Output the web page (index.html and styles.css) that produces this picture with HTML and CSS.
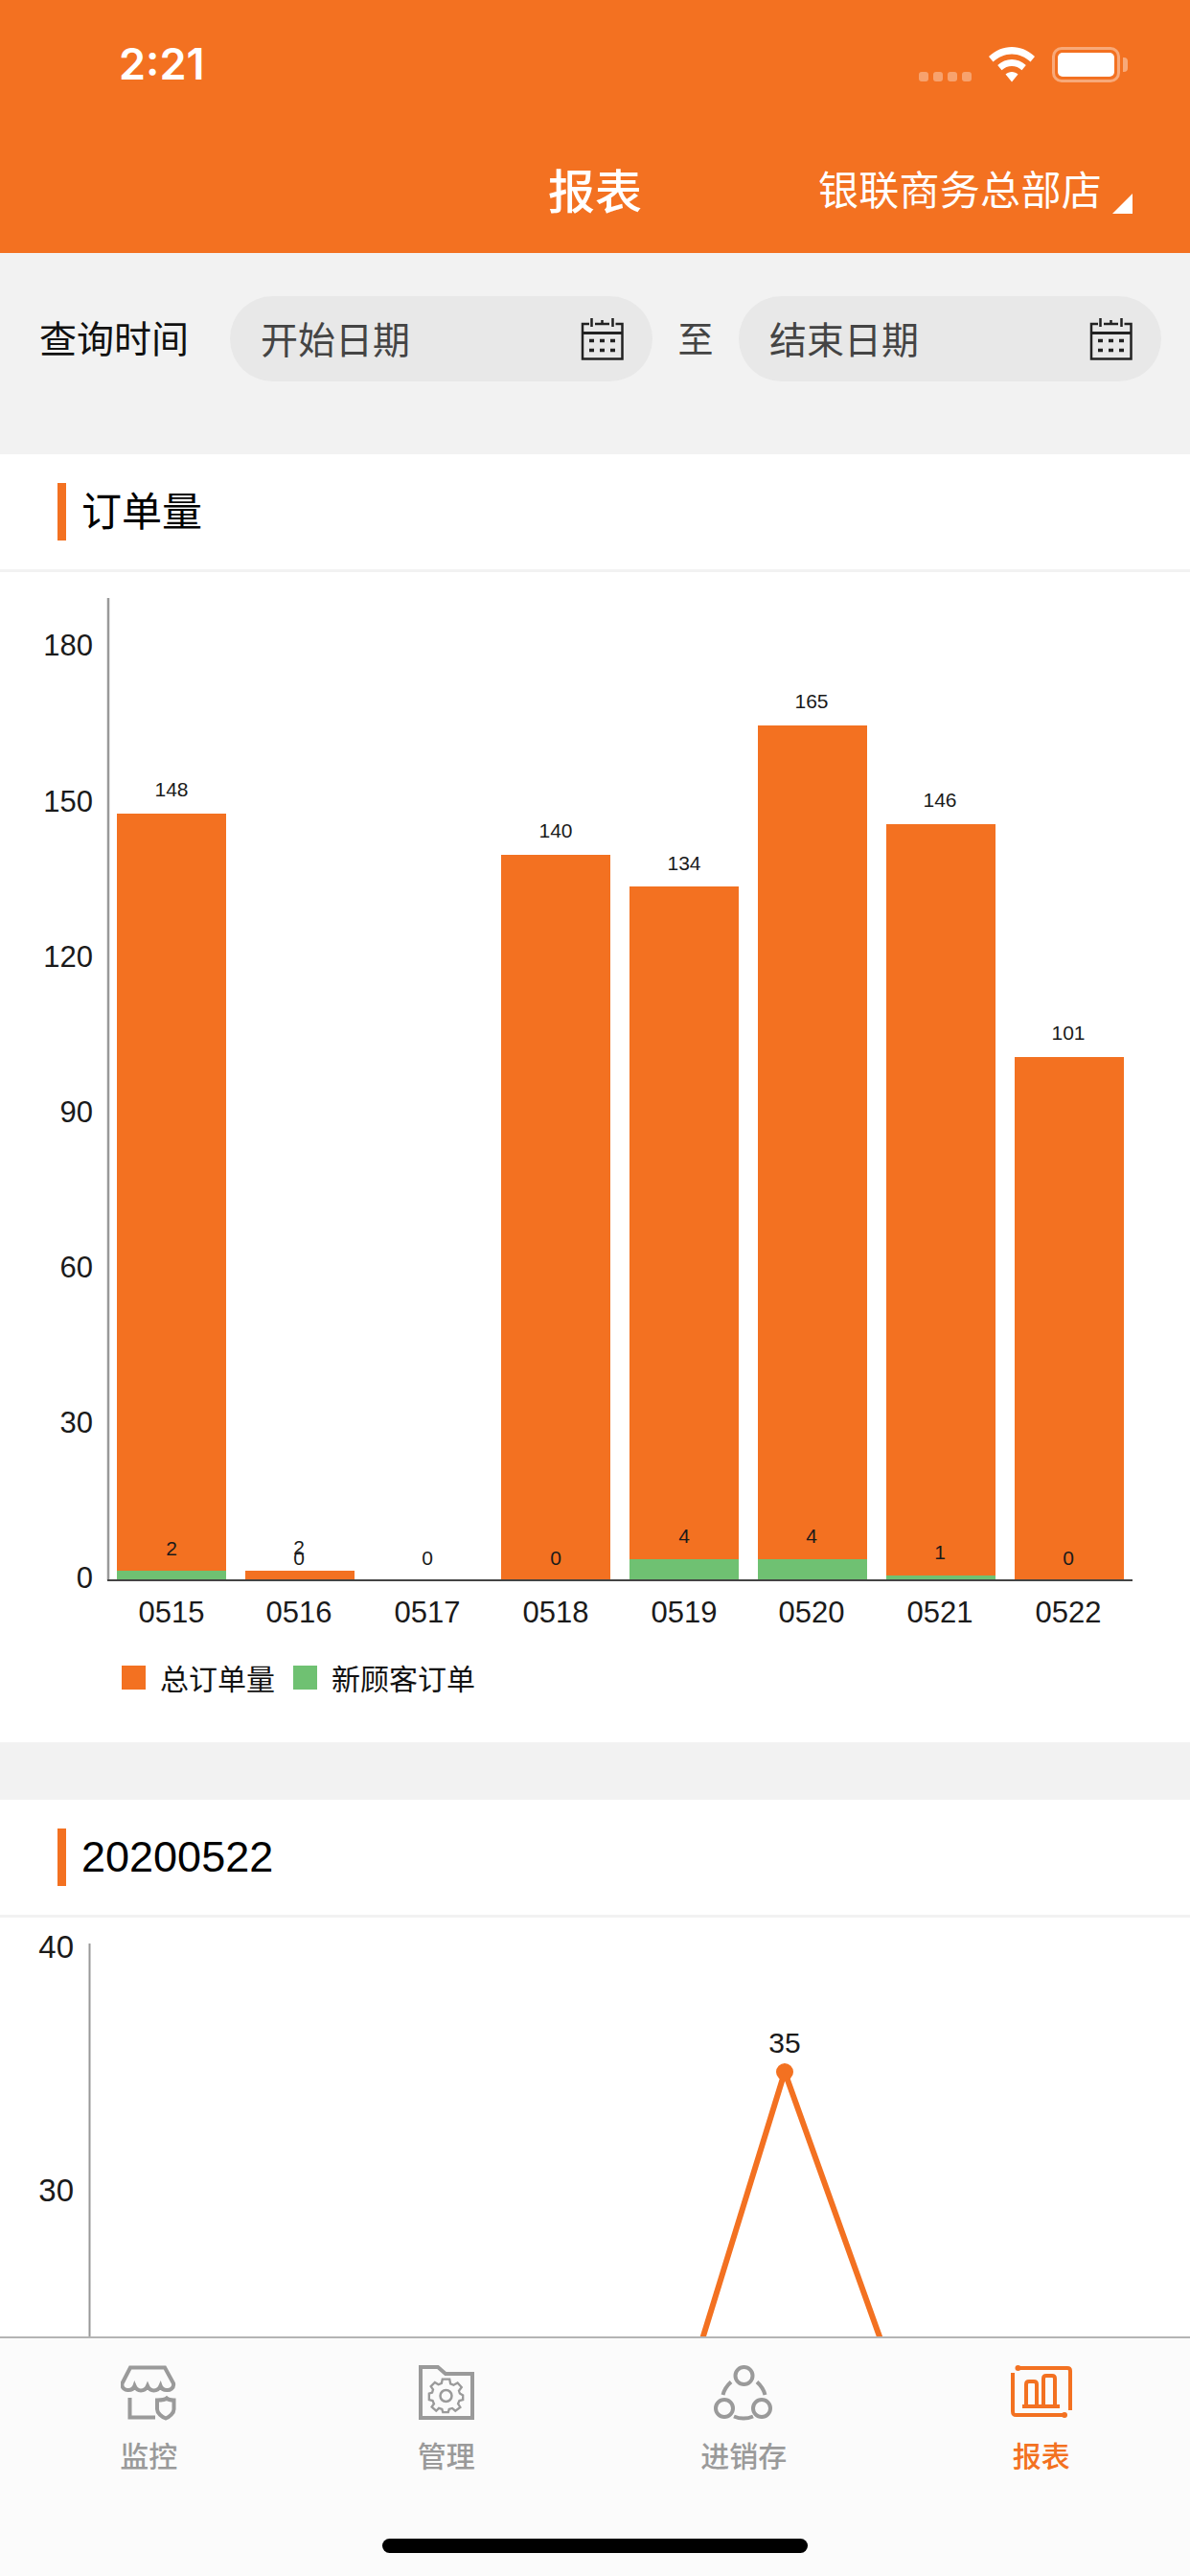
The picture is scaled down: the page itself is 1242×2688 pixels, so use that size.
FILE: index.html
```html
<!DOCTYPE html>
<html>
<head>
	<meta charset="utf-8">
	<title>报表</title>
	<link rel="stylesheet" href="styles.css">
</head>
<body>
<div class="page">
	<header class="top">
		<div class="status">
			<span class="time">2:21</span>
			<div class="status-icons">
				<div class="dots"><i></i><i></i><i></i><i></i></div>
				<svg class="wifi" width="48" height="37" viewBox="0 0 48 37">
					<path d="M24 0C33 0 41 3.500 48 10L43.500 15.500C38 10.500 31.500 7.500 24 7.500S10 10.500 4.500 15.500L0 10C7 3.500 15 0 24 0Z" fill="#fff"/>
					<path d="M24 13C29.500 13 34.500 15 38.800 19L34.500 24.200C31.500 21.500 28 20 24 20S16.500 21.500 13.500 24.200L9.200 19C13.500 15 18.500 13 24 13Z" fill="#fff"/>
					<path d="M24 26C26.500 26 28.700 26.900 30.500 28.500L24 36.500L17.500 28.500C19.300 26.900 21.500 26 24 26Z" fill="#fff"/>
				</svg>
				<div class="battery"><div class="battery-fill"></div><div class="battery-nub"></div></div>
			</div>
		</div>
		<div class="nav">
			<span></span>
			<h1 class="nav-title">报表</h1>
			<div class="store"><span>银联商务总部店</span><i class="store-arrow"></i></div>
		</div>
	</header>

	<div class="filter">
		<label class="filter-label">查询时间</label>
		<div class="date-pill">
			<span>开始日期</span>
			<svg class="cal" width="45" height="45" viewBox="0 0 45 45">
				<use href="#cal-icon"/>
			</svg>
		</div>
		<span class="filter-to">至</span>
		<div class="date-pill">
			<span>结束日期</span>
			<svg class="cal" width="45" height="45" viewBox="0 0 45 45">
				<use href="#cal-icon"/>
			</svg>
		</div>
	</div>

	<section class="card">
		<div class="card-title"><span>订单量</span></div>
		<svg class="chart" width="1242" height="1117" viewBox="0 597 1242 1117">
			<line class="axis-y" x1="113" y1="624" x2="113" y2="1649"/>

			<rect class="bar" x="122" y="849" width="114" height="799"/>
			<rect class="bar" x="256" y="1639" width="114" height="9"/>
			<rect class="bar" x="523" y="892" width="114" height="756"/>
			<rect class="bar" x="657" y="925" width="114" height="723"/>
			<rect class="bar" x="791" y="757" width="114" height="891"/>
			<rect class="bar" x="925" y="860" width="114" height="788"/>
			<rect class="bar" x="1059" y="1103" width="114" height="545"/>

			<rect class="bar-new" x="122" y="1639" width="114" height="9"/>
			<rect class="bar-new" x="657" y="1627" width="114" height="21"/>
			<rect class="bar-new" x="791" y="1627" width="114" height="21"/>
			<rect class="bar-new" x="925" y="1644" width="114" height="4"/>

			<line class="axis-x" x1="112" y1="1649" x2="1182" y2="1649"/>

			<g class="tick-y">
				<text x="97" y="684">180</text>
				<text x="97" y="847">150</text>
				<text x="97" y="1009">120</text>
				<text x="97" y="1171">90</text>
				<text x="97" y="1333">60</text>
				<text x="97" y="1495">30</text>
				<text x="97" y="1657">0</text>
			</g>
			<g class="tick-x">
				<text x="179" y="1693">0515</text>
				<text x="312" y="1693">0516</text>
				<text x="446" y="1693">0517</text>
				<text x="580" y="1693">0518</text>
				<text x="714" y="1693">0519</text>
				<text x="847" y="1693">0520</text>
				<text x="981" y="1693">0521</text>
				<text x="1115" y="1693">0522</text>
			</g>
			<g class="val">
				<text x="179" y="831">148</text>
				<text x="580" y="874">140</text>
				<text x="714" y="908">134</text>
				<text x="847" y="739">165</text>
				<text x="981" y="842">146</text>
				<text x="1115" y="1085">101</text>

				<text x="179" y="1623">2</text>
				<text x="312" y="1622">2</text>
				<text x="312" y="1633">0</text>
				<text x="446" y="1633">0</text>
				<text x="580" y="1633">0</text>
				<text x="714" y="1610">4</text>
				<text x="847" y="1610">4</text>
				<text x="981" y="1627">1</text>
				<text x="1115" y="1633">0</text>
			</g>
		</svg>
		<div class="legend">
			<div class="legend-item"><i class="swatch swatch-total"></i>总订单量</div>
			<div class="legend-item"><i class="swatch swatch-new"></i>新顾客订单</div>
		</div>
	</section>

	<section class="card card-gap">
		<div class="card-title title-num"><span>20200522</span></div>
		<svg class="chart chart-line" width="1242" height="440" viewBox="0 2001 1242 440">
			<line class="axis-y thin" x1="93.500" y1="2028" x2="93.500" y2="2441"/>
			<g class="tick-y">
				<text x="77" y="2043">40</text>
				<text x="77" y="2297">30</text>
			</g>
			<polyline class="trend" points="733,2441 819,2162 919,2441"/>
			<circle class="trend-dot" cx="819" cy="2162" r="9"/>
			<text class="trend-val" x="819" y="2142">35</text>
		</svg>
	</section>

	<nav class="tabbar">
		<div class="tab">
			<svg width="58" height="58" viewBox="0 0 58 58" class="tab-icon">
				<path d="M10 2.500H46L55 19C56 24 51 26.500 48 26C45 26 42.500 24.500 41.500 21.500C40 25 37 26.500 34.500 26.500S29.500 25 28 21.500C26.500 25 24 26.500 21 26.500S16 25 14.500 21.500C13.500 24.500 11 26 8 26C5 26.500 .5 24 1.500 19Z"/>
				<path d="M9.500 34V54.500H36"/>
				<path d="M38 36.500C43 36.500 47 35.500 48 34.500C49 35.500 53 36.500 55.500 36.500V46C55.500 50 51 54 47 55.500C43 54 38 50 38 46Z"/>
			</svg>
			<span>监控</span>
		</div>
		<div class="tab">
			<svg width="58" height="58" viewBox="0 0 58 58" class="tab-icon">
				<path d="M2 2H20L28 9H56V55H2Z"/>
				<g class="gear" transform="translate(28.500 32)">
					<path d="M-4-17H4L5-12 8.500-10.500 13-13 17.500-8 14.500-4 15.500-1 19 1V6L15 7 13.500 10.500 16 14.500 10.500 18.500 7 15.500 3.500 16.500 2.500 20H-3.500L-4.500 16.500-8 15.500-11 18.500-16 14-13.500 10.500-15 7-19 6V-1L-15.500-2-14.500-5.500-17-9-12.500-13.500-8.500-11-5-12.500Z" transform="translate(0 -1.500) scale(.93)"/>
					<circle cx="0" cy="0" r="6"/>
				</g>
			</svg>
			<span>管理</span>
		</div>
		<div class="tab">
			<svg width="62" height="58" viewBox="0 0 62 58" class="tab-icon">
				<circle cx="31.500" cy="11" r="9"/>
				<circle cx="11" cy="45" r="9"/>
				<circle cx="50" cy="45" r="9"/>
				<path d="M18 17.500C13 22 10.500 27 9.500 31"/>
				<path d="M45 17.500C50 22 52.500 27 53.500 31"/>
				<path d="M21 53.500C27 56 35 56 41 53.500"/>
			</svg>
			<span>进销存</span>
		</div>
		<div class="tab tab-on">
			<svg width="64" height="60" viewBox="0 0 64 60" class="tab-icon">
				<path d="M7.500 4H59C61 4 62 5 62 7V48"/>
				<path d="M2 9V49C2 52 3 53 5.500 53H56"/>
				<circle class="solid" cx="7.500" cy="4" r="3"/>
				<circle class="solid" cx="56" cy="53" r="3"/>
				<path d="M12 44H51"/>
				<path d="M16 44V21C16 19 17 18 19 18H24C26 18 27 19 27 21V44"/>
				<path d="M34 44V15C34 13 35 12 37 12H43C45 12 46 13 46 15V44"/>
			</svg>
			<span>报表</span>
		</div>
		<div class="home-bar"></div>
	</nav>
</div>

<svg class="defs" width="0" height="0">
	<symbol id="cal-icon" viewBox="0 0 45 45">
		<path d="M9 7H2V43.500H43.500V7H36.500M15 7H30" fill="none" stroke="#222" stroke-width="2.500"/>
		<path d="M2 16.500H43.500" stroke="#222" stroke-width="3"/>
		<path d="M11.500 1V10M22.500 3V6M33.500 1V10" stroke="#222" stroke-width="2.500"/>
		<path d="M9 24.500h5M20 24.500h5M31 24.500h5M9 34.500h5M20 34.500h5M31 34.500h5" stroke="#222" stroke-width="3.500"/>
	</symbol>
</svg>
</body>
</html>
```
FILE: styles.css
```css
* {
	box-sizing: border-box;
}
html, body {
	margin: 0;
	padding: 0;
	background: #f2f2f2;
}
body {
	font-family: "Noto Sans CJK SC", "Liberation Sans", sans-serif;
	color: #000;
}
.page {
	position: relative;
	width: 1242px;
	height: 2688px;
	overflow: hidden;
	background: #f2f2f2;
}
.defs {
	position: absolute;
}

/* header */
.top {
	height: 264px;
	background: #f37121;
	color: #fff;
}
.status {
	height: 132px;
	display: flex;
	justify-content: space-between;
	align-items: flex-start;
	padding: 44px 73px 0 124px;
}
.time {
	font-family: Inter, "Liberation Sans", sans-serif;
	font-size: 45px;
	line-height: 46px;
	font-weight: 600;
}
.status-icons {
	display: flex;
	align-items: flex-end;
	padding-top: 5px;
}
.dots {
	display: flex;
	gap: 5px;
	margin-right: 18px;
	padding-bottom: 1px;
}
.dots i {
	width: 10px;
	height: 10px;
	border-radius: 3px;
	background: rgba(255,255,255,.35);
}
.wifi {
	margin-right: 18px;
}
.battery {
	position: relative;
	width: 71px;
	height: 37px;
	border: 3px solid rgba(255,255,255,.4);
	border-radius: 10px;
	padding: 3px;
}
.battery-fill {
	height: 100%;
	background: #fff;
	border-radius: 5px;
}
.battery-nub {
	position: absolute;
	right: -11px;
	top: 8px;
	width: 5px;
	height: 15px;
	border-radius: 0 4px 4px 0;
	background: rgba(255,255,255,.4);
}
.nav {
	display: grid;
	grid-template-columns: 1fr auto 1fr;
	align-items: center;
	height: 132px;
}
.nav-title {
	margin: 0;
	font-size: 49px;
	line-height: 66px;
	font-weight: 500;
	position: relative;
	top: -1px;
}
.store {
	justify-self: end;
	display: flex;
	align-items: flex-end;
	gap: 11px;
	margin-right: 60px;
	font-size: 42px;
	letter-spacing: .3px;
	line-height: 60px;
	position: relative;
	top: -2px;
}
.store-arrow {
	width: 21px;
	height: 21px;
	margin-bottom: 3px;
	background: #fff;
	clip-path: polygon(100% 0, 100% 100%, 0 100%);
}

/* date filter */
.filter {
	height: 210px;
	display: flex;
	align-items: flex-start;
	padding: 45px 30px 0 41px;
}
.filter-label {
	width: 199px;
	font-size: 39px;
	line-height: 85px;
	color: #111;
}
.date-pill {
	width: 441px;
	height: 89px;
	border-radius: 45px;
	background: #e8e8e8;
	display: flex;
	align-items: center;
	justify-content: space-between;
	padding: 0 30px 0 32px;
	font-size: 39px;
	color: #444;
}
.date-pill span {
	position: relative;
	top: -2px;
}
.filter-to {
	width: 90px;
	text-align: center;
	font-size: 37px;
	line-height: 86px;
	color: #444;
}
.cal {
	display: block;
}

/* cards */
.card {
	background: #fff;
}
.card-gap {
	margin-top: 60px;
	height: 900px;
}
.card-title {
	height: 123px;
	padding: 30px 0 0 60px;
	border-bottom: 3px solid #f2f2f2;
}
.card-title span {
	display: block;
	height: 60px;
	border-left: 9px solid #f37121;
	padding-left: 16px;
	font-size: 42px;
	line-height: 62px;
	font-family: "Liberation Sans", "Noto Sans CJK SC", sans-serif;
}
.title-num span {
	font-size: 45px;
	line-height: 60px;
}
.chart {
	display: block;
	font-family: "Liberation Sans", sans-serif;
}
.chart text {
	fill: #1a1a1a;
}
.chart-line .tick-y text {
	font-size: 33px;
}
.axis-y {
	stroke: #999;
	stroke-width: 2.500;
}
.axis-y.thin {
	stroke-width: 2;
}
.axis-x {
	stroke: #444;
	stroke-width: 2;
}
.bar {
	fill: #f37121;
}
.bar-new {
	fill: #6fc172;
}
.tick-y text {
	font-size: 31px;
	text-anchor: end;
}
.tick-x text {
	font-size: 31px;
	text-anchor: middle;
}
.val text {
	font-size: 21px;
	text-anchor: middle;
}
.trend {
	fill: none;
	stroke: #f37121;
	stroke-width: 6;
}
.trend-dot {
	fill: #f37121;
}
.trend-val {
	font-size: 30px;
	text-anchor: middle;
}
.legend {
	height: 104px;
	display: flex;
	padding: 17px 0 0 127px;
	gap: 19px;
}
.legend-item {
	display: flex;
	align-items: center;
	height: 38px;
	font-size: 30px;
	color: #111;
}
.swatch {
	width: 25px;
	height: 25px;
	margin-right: 15px;
}
.swatch-total {
	background: #f37121;
}
.swatch-new {
	background: #6fc172;
}

/* bottom tabs, they sit over the scrolling content */
.tabbar {
	position: absolute;
	left: 0;
	right: 0;
	bottom: 0;
	height: 250px;
	display: flex;
	padding-top: 27px;
	background: #fbfbfb;
	border-top: 2px solid #b4b4b4;
}
.tab {
	flex: 1;
	display: flex;
	flex-direction: column;
	align-items: center;
	font-size: 30px;
	font-weight: 500;
	line-height: 40px;
	color: #9a9a9a;
}
.tab-on {
	color: #f37121;
}
.tab-icon {
	display: block;
	height: 60px;
	margin-bottom: 14px;
	fill: none;
	stroke: currentColor;
	stroke-width: 4;
}
.tab-icon .solid {
	fill: currentColor;
	stroke: none;
}
.gear path, .gear circle {
	stroke-width: 2.500;
}
.home-bar {
	position: absolute;
	left: 399px;
	bottom: 24px;
	width: 444px;
	height: 15px;
	border-radius: 8px;
	background: #000;
}
```
